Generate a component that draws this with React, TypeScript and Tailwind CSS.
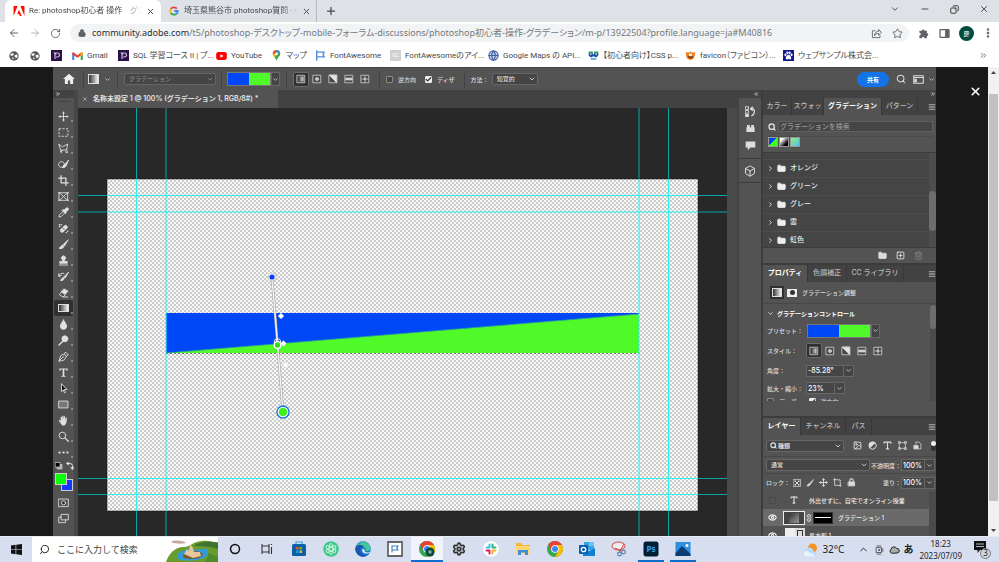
import type { ReactNode } from "react";
import {
	ArrowLeft,
	ArrowRight,
	Box,
	Check,
	ChevronDown,
	ChevronRight,
	ChevronsLeft,
	ChevronsRight,
	ChevronUp,
	Copy,
	Crop,
	EllipsisVertical,
	Eye,
	Folder,
	Globe,
	Image as ImageIcon,
	Link2,
	Lock,
	Menu,
	Minus,
	Move,
	Plus,
	RotateCw,
	Search,
	Settings,
	SquarePlus,
	Star,
	Trash2,
	X,
} from "lucide-react";

interface IconProps {
	className?: string;
	children: ReactNode;
}

function Glyph({ className = "size-3", children }: IconProps) {
	return (
		<svg
			viewBox="0 0 16 16"
			fill="none"
			stroke="currentColor"
			strokeWidth="1.3"
			strokeLinecap="round"
			strokeLinejoin="round"
			aria-hidden="true"
			className={`shrink-0 ${className}`}
		>
			{children}
		</svg>
	);
}

/* ---------- browser ---------- */

function GoogleG() {
	return (
		<Glyph className="size-[10px]">
			<g strokeWidth="3" strokeLinecap="butt">
				<path d="M12.5 4.2A6 6 0 0 0 3 4.8" stroke="#ea4335" />
				<path d="M3 4.8a6 6 0 0 0 0 6.4" stroke="#fbbc05" />
				<path d="M3 11.2a6 6 0 0 0 9 1.3" stroke="#34a853" />
				<path d="M12 12.5A6 6 0 0 0 14 8H8.5" stroke="#4285f4" />
			</g>
		</Glyph>
	);
}

function AdobeLogo() {
	return (
		<svg viewBox="0 0 24 22" className="h-[10px] w-[12px] shrink-0" aria-hidden="true">
			<path d="M0 0h9L0 22zM15 0h9v22zM12 8l6 14h-4l-2-4.500H8z" fill="#fa0f00" />
		</svg>
	);
}

function TabStrip() {
	return (
		<div className="flex h-[22px] items-stretch bg-[#dee1e6] text-[8px] text-[#45494d]">
			<div className="ml-[5px] flex w-[156px] items-center rounded-t-md bg-white pr-[6px] pl-2">
				<AdobeLogo />
				<span className="ml-1 flex-1 overflow-hidden whitespace-pre [mask-image:linear-gradient(to_right,#000_85%,transparent)]">
					Re: photoshop初心者 操作　グラデ
				</span>
				<button type="button" aria-label="Close tab" className="ml-1">
					<X className="size-[9px]" strokeWidth={2.5} />
				</button>
			</div>
			<div className="flex w-[156px] items-center border-r border-[#9aa0a6]/60 pr-[5px] pl-2">
				<GoogleG />
				<span className="ml-[5px] flex-1 overflow-hidden whitespace-nowrap [mask-image:linear-gradient(to_right,#000_85%,transparent)]">
					埼玉県熊谷市 photoshop質問 - G
				</span>
				<button type="button" aria-label="Close tab" className="ml-1">
					<X className="size-[9px]" strokeWidth={2.5} />
				</button>
			</div>
			<button type="button" aria-label="New tab" className="ml-2">
				<Plus className="size-3" strokeWidth={2.5} />
			</button>
			<div className="ml-auto flex items-center gap-[20px] pr-[10px] pb-1 text-[#333]">
				<button type="button" aria-label="Search tabs">
					<ChevronDown className="size-[10px]" />
				</button>
				<button type="button" aria-label="Minimize">
					<Minus className="size-[10px]" />
				</button>
				<button type="button" aria-label="Restore">
					<Copy className="size-[9px] -scale-x-100" strokeWidth={2.5} />
				</button>
				<button type="button" aria-label="Close">
					<X className="size-[10px]" />
				</button>
			</div>
		</div>
	);
}

function AddressBar() {
	return (
		<div className="flex h-[22px] items-center bg-white pr-[5px] pl-2 text-[#5f6368]">
			<button type="button" aria-label="Back">
				<ArrowLeft className="size-3" />
			</button>
			<button type="button" aria-label="Forward" className="ml-[9px] text-[#b5b8bb]">
				<ArrowRight className="size-3" />
			</button>
			<button type="button" aria-label="Reload" className="ml-[9px]">
				<RotateCw className="size-[11px]" />
			</button>
			<div className="ml-[9px] flex h-[18px] flex-1 items-center rounded-full bg-[#f1f3f4] pr-[6px] pl-2">
				<Lock className="size-2 fill-current" strokeWidth={3} />
				<div className="ml-[6px] flex-1 overflow-hidden font-['Noto_Sans','Noto_Sans_CJK_JP',sans-serif] text-[9px] whitespace-nowrap text-[#75797d]">
					<span className="text-[#2c2f33]">community.adobe.com</span>
					/t5/photoshop-デスクトップ-mobile-フォーラム-discussions/photoshop初心者-操作-グラデーション/m-p/13922504?profile.language=ja#M40816
				</div>
				<button type="button" aria-label="Share">
					<Glyph className="size-[11px]">
						<path d="M6 4H2v10h11v-3M5 11c0-4 3-6 6-6V2l4 4.500-4 4V8c-3 0-5 1-6 3z" />
					</Glyph>
				</button>
				<button type="button" aria-label="Bookmark" className="ml-[10px]">
					<Star className="size-[11px]" />
				</button>
			</div>
			<button type="button" aria-label="Extensions" className="ml-[9px]">
				<Glyph className="size-[11px]">
					<path
						d="M2 4h3.500a2 2 0 1 1 4 0H13v3.500a2 2 0 1 1 0 4V15H9.500a2 2 0 1 0-4 0H2v-4a2 2 0 1 0 0-4z"
						fill="currentColor"
						stroke="none"
					/>
				</Glyph>
			</button>
			<button type="button" aria-label="Side panel" className="ml-[10px]">
				<Glyph className="size-[11px]">
					<path d="M1.500 2.500h13v11h-13z" strokeWidth="1.800" />
					<path d="M10 3h4v10h-4z" fill="currentColor" />
				</Glyph>
			</button>
			<button
				type="button"
				className="ml-[9px] flex size-[15px] items-center justify-center rounded-full bg-[#004d40] text-[6px] text-white"
			>
				慶
			</button>
			<button type="button" aria-label="Menu" className="ml-2">
				<EllipsisVertical className="size-3" strokeWidth={3} />
			</button>
		</div>
	);
}

function PurpleMark() {
	return (
		<svg viewBox="0 0 11 11" className="size-[11px] shrink-0" aria-hidden="true">
			<path d="M0 0h11v11H0z" fill="#2b1145" />
			<path d="M4 9V3h2.500a2 2 0 0 1 0 4H5" fill="none" stroke="#cdbbe0" strokeWidth="1.200" />
			<path d="M3 2.500l2 2" stroke="#fff" />
		</svg>
	);
}

function GlobeMark() {
	return (
		<svg viewBox="0 0 16 16" className="size-[10px] shrink-0" aria-hidden="true">
			<circle cx="8" cy="8" r="7.500" fill="#55595e" />
			<path d="M2 5l4-2 2 2-3 3-2-1zM9 7l4-2 1 4-3 3-1-3-2-1zM5 10l3 1-2 3z" fill="#fff" />
		</svg>
	);
}

interface Bookmark {
	icon: ReactNode;
	label: string;
	width: string;
}

const bookmarks: Bookmark[] = [
	{
		label: "Gmail",
		width: "w-[31px]",
		icon: (
			<svg viewBox="0 0 20 15" className="h-2 w-[11px] shrink-0" aria-hidden="true">
				<path d="M0 2v13h4V5z" fill="#4285f4" />
				<path d="M20 2v13h-4V5z" fill="#34a853" />
				<path d="M0 2l2-2 8 6 8-6 2 2v2l-10 7L0 4z" fill="#ea4335" />
				<path d="M16 3l2-3 2 2v3l-4 3z" fill="#fbbc04" />
			</svg>
		),
	},
	{ label: "SQL 学習コース II | プ...", width: "w-[83px]", icon: <PurpleMark /> },
	{
		label: "YouTube",
		width: "w-[40px]",
		icon: (
			<svg viewBox="0 0 20 15" className="h-2 w-[11px] shrink-0" aria-hidden="true">
				<rect width="20" height="15" rx="4" fill="#f00" />
				<path d="M8 4l6 3.500-6 3.500z" fill="#fff" />
			</svg>
		),
	},
	{
		label: "マップ",
		width: "w-[29px]",
		icon: (
			<svg viewBox="0 0 16 16" className="size-[11px] shrink-0" aria-hidden="true">
				<path d="M8 0a5.500 5.500 0 0 1 5.500 5.500C13.500 9 9 11 8 16 7 11 2.500 9 2.500 5.500z" fill="#34a853" />
				<path d="M8 0a5.500 5.500 0 0 0-5.500 5.500L8 6z" fill="#ea4335" />
				<path d="M8 0a5.500 5.500 0 0 1 5 3.500L8 6z" fill="#4285f4" />
				<path d="M2.500 5.500C2.500 8 4 9 5.500 11L10 5z" fill="#fbbc04" />
				<circle cx="8" cy="5.500" r="2" fill="#fff" />
			</svg>
		),
	},
	{
		label: "FontAwesome",
		width: "w-[60px]",
		icon: (
			<Glyph className="size-[11px] text-[#528dd7]">
				<path d="M2.500 1v14M2.500 3h11l-2 3.500 2 3.500h-11" strokeWidth="2" />
			</Glyph>
		),
	},
	{
		label: "FontAwesomeのアイ...",
		width: "w-[83px]",
		icon: (
			<span className="flex size-[11px] shrink-0 items-center justify-center bg-[#d0d0d0] text-[5px] text-white">
				GC
			</span>
		),
	},
	{
		label: "Google Maps の API...",
		width: "w-[85px]",
		icon: <Globe className="size-[11px] shrink-0 fill-[#c5cfe6] text-[#3f5fa8]" strokeWidth={2.5} />,
	},
	{
		label: "【初心者向け】CSS p...",
		width: "w-[82px]",
		icon: (
			<svg viewBox="0 0 16 14" className="size-[11px] shrink-0" aria-hidden="true">
				<path d="M1 1h6v4H1zM9 1h6v4H9z" fill="#2ba05a" />
				<path d="M1 4h6l1 2 1-2h6v3l-3 3-4-2-4 2-3-3z" fill="#1d4fa8" />
				<path d="M3 4h2v2H3zM11 4h2v2h-2z" fill="#fff" />
				<path d="M4 11h8v2H4z" fill="#2b8fd0" />
			</svg>
		),
	},
	{
		label: "favicon（ファビコン）...",
		width: "w-[83px]",
		icon: (
			<svg viewBox="0 0 16 14" className="size-[11px] shrink-0" aria-hidden="true">
				<path d="M1 2l4 1 3-2 3 2 4-1-1 6-2 4-4 1.500L4 12 2 9z" fill="#f07d1a" />
				<path d="M4 8h8l-2 3H6z" fill="#5a3010" />
				<circle cx="8" cy="6" r="2.300" fill="#fff3df" />
			</svg>
		),
	},
	{
		label: "ウェブサンプル株式会...",
		width: "w-[83px]",
		icon: (
			<svg viewBox="0 0 16 16" className="size-[11px] shrink-0" aria-hidden="true">
				<path d="M0 0h16v16H0z" fill="#101a8c" />
				<g fill="#fff">
					<ellipse cx="3.500" cy="7" rx="1.500" ry="2" />
					<ellipse cx="6.300" cy="4" rx="1.500" ry="2" />
					<ellipse cx="9.700" cy="4" rx="1.500" ry="2" />
					<ellipse cx="12.500" cy="7" rx="1.500" ry="2" />
					<path d="M8 7c2 0 4 3 4 5s-2 2-4 1c-2 1-4 1-4-1s2-5 4-5z" />
				</g>
			</svg>
		),
	},
];

function BookmarksBar() {
	return (
		<nav className="flex h-[23px] items-center bg-white pr-[11px] pl-[9px] text-[8px] text-[#45494d]">
			<a href="#a" aria-label="Site" className="mr-[11px]">
				<GlobeMark />
			</a>
			<a href="#b" aria-label="Site" className="mr-[11px]">
				<GlobeMark />
			</a>
			<a href="#c" aria-label="Site" className="mr-[10px]">
				<PurpleMark />
			</a>
			{bookmarks.map((b) => (
				<a key={b.label} href="#bookmark" className="flex items-center gap-1 whitespace-nowrap">
					{b.icon}
					<span className={b.width}>{b.label}</span>
				</a>
			))}
			<button type="button" aria-label="More bookmarks" className="ml-auto">
				<ChevronsRight className="size-[9px]" />
			</button>
		</nav>
	);
}

/* ---------- photoshop parts ---------- */

interface SelectProps {
	label: string;
	value: string;
	className?: string;
}

function Select({ label, value, className = "" }: SelectProps) {
	return (
		<div className={`relative h-3 rounded-[2px] border border-[#666] bg-[#454545] ${className}`}>
			<select
				aria-label={label}
				className="block h-full w-full appearance-none bg-transparent pl-1 leading-none outline-none"
			>
				<option>{value}</option>
			</select>
			<ChevronDown className="pointer-events-none absolute top-px right-px size-2" strokeWidth={2.5} />
		</div>
	);
}

interface NumberFieldProps {
	id: string;
	label: string;
	value: string;
	width: string;
	labelClass?: string;
}

function NumberField({ id, label, value, width, labelClass = "" }: NumberFieldProps) {
	return (
		<div className="flex items-center">
			<label htmlFor={id} className={`whitespace-nowrap ${labelClass}`}>
				{label}
			</label>
			<div className="flex h-3 items-stretch border border-[#666] bg-[#454545]">
				<input
					id={id}
					defaultValue={value}
					className={`bg-transparent pl-px text-[7px] leading-none font-medium text-white outline-none ${width}`}
				/>
				<button type="button" aria-label={`${label} options`} className="border-l border-[#666] px-px">
					<ChevronDown className="size-[7px]" strokeWidth={2.5} />
				</button>
			</div>
		</div>
	);
}

function GradientPreset({ className }: { className: string }) {
	return (
		<div className="flex h-[14px] items-stretch">
			<button
				type="button"
				aria-label="Gradient preset"
				className={`border border-[#777] bg-[linear-gradient(to_right,#0047f5_50%,#50fa28_50%)] ${className}`}
			/>
			<button type="button" aria-label="Gradient presets" className="border border-[#666] bg-[#454545]">
				<ChevronDown className="size-[7px]" strokeWidth={2.5} />
			</button>
		</div>
	);
}

const gradientStyles: { name: string; art: ReactNode }[] = [
	{ name: "Linear", art: <path d="M4 4h8v8H4z" fill="url(#fade)" stroke="none" /> },
	{
		name: "Radial",
		art: <circle cx="8" cy="8" r="2.500" fill="#ddd" fillOpacity=".8" />,
	},
	{ name: "Angle", art: <path d="M2 2l6 6 6 6V2z" fill="#e4e4e4" /> },
	{ name: "Reflected", art: <path d="M3 6.500h10v3H3z" fill="#ddd" /> },
	{ name: "Diamond", art: <path d="M8 3v10M3 8h10M7 7h2v2H7z" /> },
];

function GradientStyleButtons() {
	return (
		<div className="flex items-center">
			{gradientStyles.map((s, i) => (
				<button
					key={s.name}
					type="button"
					aria-label={s.name}
					className={`flex h-[15px] w-4 items-center justify-center rounded-[2px] ${i === 0 ? "border border-[#6a6a6a] bg-[#303030]" : ""}`}
				>
					<Glyph className="size-[10px] text-[#d0d0d0]">
						<defs>
							<linearGradient id="fade">
								<stop offset="0" stopColor="#444" />
								<stop offset="1" stopColor="#ddd" />
							</linearGradient>
						</defs>
						<path d="M2 2h12v12H2z" fill="#484848" />
						{s.art}
					</Glyph>
				</button>
			))}
		</div>
	);
}

function GradientIcon({ className = "h-[9px] w-3" }: { className?: string }) {
	return (
		<span
			className={`block shrink-0 border border-[#ddd] bg-[linear-gradient(to_right,#333,#f5f5f5)] ${className}`}
		/>
	);
}

function Divider() {
	return <span className="h-[17px] w-px bg-[#424242]" />;
}

interface TickProps {
	id: string;
	label: string;
	checked?: boolean;
}

function Tick({ id, label, checked }: TickProps) {
	return (
		<label htmlFor={id} className="flex items-center gap-[5px]">
			<span className="relative block size-[7px]">
				<input
					id={id}
					type="checkbox"
					defaultChecked={checked}
					className="peer block size-[7px] appearance-none rounded-[1px] border border-[#888] bg-[#454545] checked:border-[#eee] checked:bg-[#eee]"
				/>
				<Check
					className="pointer-events-none absolute inset-0 hidden size-[7px] text-[#333] peer-checked:block"
					strokeWidth={4}
				/>
			</span>
			{label}
		</label>
	);
}

function OptionsBar() {
	return (
		<div className="flex h-[23px] items-center border-t border-[#444] bg-[#535353] text-[6px]">
			<button type="button" aria-label="Home" className="ml-[10px]">
				<Glyph className="size-3 text-[#eee]">
					<path d="M8 1L0 8h2.500v6.500H6.500V10h3v4.500h4V8H16z" fill="currentColor" stroke="none" />
				</Glyph>
			</button>
			<span className="ml-[8px] flex items-center">
				<Divider />
			</span>
			<button type="button" aria-label="Gradient tool" className="ml-1 flex items-center gap-[5px]">
				<GradientIcon className="h-[10px] w-[11px]" />
				<ChevronDown className="size-[7px]" strokeWidth={2.5} />
			</button>
			<span className="mx-[6px] flex items-center">
				<Divider />
			</span>
			<Select label="Gradient kind" value="グラデーション" className="w-[92px] text-[#888]" />
			<span className="mx-[5px] flex items-center">
				<Divider />
			</span>
			<GradientPreset className="w-[44px]" />
			<span className="mx-[6px] flex items-center">
				<Divider />
			</span>
			<GradientStyleButtons />
			<span className="mx-[6px] flex items-center">
				<Divider />
			</span>
			<Tick id="reverse" label="逆方向" />
			<span className="ml-[9px]">
				<Tick id="dither" label="ディザ" checked />
			</span>
			<span className="mx-[6px] ml-[9px] flex items-center">
				<Divider />
			</span>
			<span>方法：</span>
			<Select label="Method" value="知覚的" className="ml-[3px] w-[46px]" />
			<button
				type="button"
				className="ml-auto h-[15px] rounded-full bg-[#1473e6] px-[10px] text-[6px] font-bold text-white"
			>
				共有
			</button>
			<button type="button" aria-label="Search" className="ml-[7px]">
				<Search className="size-[10px]" strokeWidth={2.5} />
			</button>
			<button type="button" aria-label="Workspace" className="ml-[7px] flex items-center gap-[4px] pr-px">
				<Glyph className="size-[11px]">
					<path d="M1 2.500h14v11H1zM1 5h14" strokeWidth="1.500" />
					<path d="M3 7.500h2v4H3z" fill="currentColor" />
				</Glyph>
				<ChevronDown className="size-[7px]" strokeWidth={2.5} />
			</button>
		</div>
	);
}

const tools: { name: string; art: ReactNode }[] = [
	{
		name: "Move",
		art: (
			<>
				<path d="M8 3v10M3 8h10" />
				<path d="M8 .5L10 3.500H6zM8 15.500L6 12.500h4zM.5 8L3.500 6v4zM15.500 8l-3 2V6z" fill="currentColor" stroke="none" />
			</>
		),
	},
	{ name: "Marquee", art: <path d="M1.500 2.500h13v11h-13z" strokeDasharray="3 2" strokeLinecap="butt" /> },
	{ name: "Lasso", art: <path d="M1.500 2l5 3.500L14 1.500 12.500 10l-8 .5zM4.500 10.500c-2 1-1 3 .5 2.500M6 10.500l-1.500 4M12.500 10l1.500 4-3.500-1" /> },
	{
		name: "Quick selection",
		art: (
			<>
				<circle cx="5" cy="8" r="4.200" strokeDasharray="2 1" />
				<path d="M15 2L10 8c-2 .5-3 2-3 4.500 3 0 4.500-1 5-3z" fill="currentColor" />
			</>
		),
	},
	{ name: "Crop", art: <path d="M4.500 1v10.500H15M1 4.500h10.500V15" strokeWidth="1.800" /> },
	{ name: "Frame", art: <path d="M2 2.500h12v11H2zM2 2.500l12 11M14 2.500l-12 11M0 2.500h2M14 2.500h2M0 13.500h2M14 13.500h2" /> },
	{
		name: "Eyedropper",
		art: (
			<>
				<path d="M8 5.500L2 11.500 1.500 14.500 4.500 14l6-6" />
				<path d="M7.500 4l1.500.5L12 1.500a2 2 0 0 1 2.800 2.800L11.500 7l.5 1.500-1.500 1L6.500 5.500z" fill="currentColor" />
			</>
		),
	},
	{
		name: "Healing brush",
		art: (
			<>
				<path d="M4 9.500L9.500 4a2.500 2.500 0 0 1 3.500 3.500L7.500 13A2.500 2.500 0 0 1 4 9.500z" fill="currentColor" />
				<path d="M7 7.500l2.500 2.500" stroke="#535353" />
				<path d="M2 5h.5M4.500 2.500H5M2 2.500h.1M14 12h.2M12 14h.2" strokeWidth="2" />
			</>
		),
	},
	{
		name: "Brush",
		art: <path d="M14.500 1.500L7.500 8l1.500 2zM6.500 9c-3 0-2 3.500-5 4.500 3.500 1.500 7 0 6.500-3z" fill="currentColor" />,
	},
	{
		name: "Clone stamp",
		art: <path d="M2 14.500h12M2.500 11.500V9.500h4L6.500 7a3 3 0 1 1 3 0v2.500h4v2z" fill="currentColor" />,
	},
	{
		name: "History brush",
		art: (
			<>
				<path d="M15 2L8.500 8.500l1.500 1.500zM7.500 9.500c-2 0-2 3-4 4 3 1 5.500 0 5-2.500z" fill="currentColor" />
				<path d="M1.500 8c0-4 3-5 7-4.500M1 4l.5 4 3.500-1.500" />
			</>
		),
	},
	{
		name: "Eraser",
		art: (
			<>
				<path d="M9 3l5.500 3-4 4.500L5 7.500z" fill="currentColor" />
				<path d="M5 7.500L2 11l4 3h2.500l2-3.500M8 14.500h6" />
			</>
		),
	},
	{ name: "Gradient", art: null },
	{ name: "Blur", art: <path d="M8 1.500C6 5 3.500 7.500 3.500 10.500a4.500 4.500 0 0 0 9 0C12.500 7.500 10 5 8 1.500z" fill="currentColor" /> },
	{
		name: "Dodge",
		art: (
			<>
				<circle cx="10" cy="5.500" r="4.300" fill="currentColor" />
				<path d="M7 9l-5.500 5.500" strokeWidth="2" />
			</>
		),
	},
	{ name: "Pen", art: <path d="M1.500 14.500L4 6.500l5-2 3 3-2.500 5zM1.500 14.500L7 9M9 4.500l2-3 4 4-3 2M7.500 8.500h.5" /> },
	{
		name: "Type",
		art: (
			<path
				d="M2 2h12v3.500h-1.300L12 3.800H9.200v8.800l1.800.4v1.200H5V13l1.800-.4V3.800H4L3.300 5.500H2z"
				fill="currentColor"
				stroke="none"
			/>
		),
	},
	{ name: "Path selection", art: <path d="M5 1.500v11l2.500-2.500 2 4.500 1.500-.7-2-4.300h3.500z" fill="#151515" /> },
	{ name: "Rectangle", art: <path d="M1.500 3h13v10h-13z" fill="#777" /> },
	{
		name: "Hand",
		art: (
			<path
				d="M5 13.500L1.500 8.500c-.5-1 .8-1.500 1.500-.7L4.500 9 4 3.500c0-1 1.300-1 1.500 0L6.200 7V2c0-1 1.500-1 1.600 0L8 7l.8-4.500c.2-1 1.500-.8 1.500.2L10 7.500l1.500-3c.5-.8 1.500-.3 1.300.5L12 10.500c-.3 2-1.500 4-3 4.500H6.500z"
				fill="currentColor"
				strokeWidth=".5"
			/>
		),
	},
	{
		name: "Zoom",
		art: (
			<>
				<circle cx="6.500" cy="6.500" r="4.800" />
				<path d="M10 10l5 5" strokeWidth="1.800" />
			</>
		),
	},
	{ name: "More tools", art: <path d="M2 8h.5M7.800 8h.5M13.500 8h.5" strokeWidth="3" /> },
];

function ToolColumn() {
	return (
		<aside className="flex w-[25px] shrink-0 flex-col border-r-4 border-[#474747] bg-[#535353]">
			<div className="flex h-2 items-center bg-[#424242] pl-[2px]">
				<ChevronsRight className="size-[6px]" strokeWidth={3} />
			</div>
			<div className="flex h-[10px] justify-center pt-[3px]">
				<span className="h-px w-3 bg-[#444]" />
			</div>
			{tools.map((t) => (
				<button
					key={t.name}
					type="button"
					aria-label={t.name}
					className={`relative mx-px flex h-4 shrink-0 items-center justify-center rounded-[2px] text-[#e0e0e0] ${t.name === "Gradient" ? "bg-[#303030]" : ""}`}
				>
					{t.art ? <Glyph className="size-[11px]">{t.art}</Glyph> : <GradientIcon className="h-2 w-[11px]" />}
					<span className="absolute right-0 bottom-[2px] size-[2px] rounded-full bg-[#999]" />
				</button>
			))}
			<div className="flex h-3 items-center justify-between pl-[2px]">
				<Glyph className="size-2">
					<path d="M5 5h9v9H5z" fill="#aaa" />
					<path d="M1 1h9v9H1z" fill="#000" />
				</Glyph>
				<Glyph className="size-2">
					<path d="M5 3h3a5 5 0 0 1 5 5v4" strokeWidth="2" />
					<path d="M5 0v6L1 3zM10 11h6l-3 4z" fill="currentColor" />
				</Glyph>
			</div>
			<div className="relative h-5">
				<button
					type="button"
					aria-label="Background color"
					className="absolute top-[7px] left-2 size-3 border border-[#ccc] bg-[#1438ff]"
				/>
				<button
					type="button"
					aria-label="Foreground color"
					className="absolute top-px left-[2px] size-3 border border-[#ccc] bg-[#0cff0c]"
				/>
			</div>
			<button type="button" aria-label="Quick mask" className="mt-[2px] flex h-4 items-center justify-center">
				<Glyph className="size-[11px]">
					<path d="M1 3h14v11H1z" />
					<circle cx="8" cy="8.500" r="3" fill="#333" />
				</Glyph>
			</button>
			<button type="button" aria-label="Screen mode" className="flex h-4 items-center justify-center">
				<Glyph className="size-[11px]">
					<path d="M5 2h10v8H5zM5 6H1v8h10v-4" />
				</Glyph>
			</button>
		</aside>
	);
}

function Handle({ x, y }: { x: number; y: number }) {
	return (
		<path
			d={`M${x} ${y - 3}L${x + 3} ${y}L${x} ${y + 3}L${x - 3} ${y}Z`}
			fill="#fff"
			stroke="#bbb"
			strokeWidth=".4"
		/>
	);
}

function Guides({ color }: { color: string }) {
	return (
		<path
			d="M58.500 0V428M88 0V428M561 0V428M590.500 0V428M0 87.500H649M0 104H649M0 370.500H649M0 386.500H649"
			stroke={color}
			fill="none"
		/>
	);
}

function Canvas() {
	return (
		<svg
			viewBox="0 0 649 428"
			preserveAspectRatio="xMinYMin slice"
			className="h-full min-w-0 flex-1 bg-[#282828]"
			role="img"
			aria-label="Canvas"
		>
			<defs>
				<pattern id="checker" width="4" height="4" patternUnits="userSpaceOnUse">
					<path d="M0 0h4v4H0z" fill="#f8f8f8" />
					<path d="M0 0h2v2H0zM2 2h2v2H2z" fill="#cbcbcb" />
				</pattern>
				<clipPath id="board">
					<path d="M29 71h591v332H29z" />
				</clipPath>
			</defs>
			<Guides color="#08a4a6" />
			<path d="M29 71h591v332H29z" fill="url(#checker)" stroke="#111" strokeWidth=".5" />
			<path d="M88 205h473v40H88z" fill="#0047f5" />
			<path d="M88 245L561 206v39z" fill="#50fa28" />
			<path d="M88 245L561 206" stroke="#2aa0a0" strokeWidth=".8" />
			<path d="M88 245.500h473" stroke="#555" strokeDasharray="2 2" strokeWidth=".8" />
			<g clipPath="url(#board)">
				<Guides color="#2df2f2" />
			</g>
			<path d="M194 169l5.500 67 5.500 68" stroke="#999" strokeWidth="2.500" fill="none" />
			<path d="M194 169l5.500 67 5.500 68" stroke="#f4f4f4" strokeWidth="1.500" fill="none" />
			<circle cx="194" cy="169" r="4" fill="#fff" stroke="#aaa" strokeWidth=".6" />
			<circle cx="194" cy="169" r="2.600" fill="#0a3cf5" />
			<circle cx="199.500" cy="234" r="3.300" fill="none" stroke="#eee" />
			<circle cx="199.500" cy="237" r="3.300" fill="#30d820" stroke="#fff" strokeWidth="1.300" />
			<Handle x={203} y={208} />
			<Handle x={205.5} y={235.5} />
			<Handle x={207.5} y={257} />
			<circle cx="205" cy="304" r="6" fill="#fff" stroke="#1473e6" strokeWidth="1.300" />
			<circle cx="205" cy="304" r="4.300" fill="#3fee1c" />
		</svg>
	);
}

function DocumentArea() {
	return (
		<main className="flex min-w-0 flex-1 flex-col">
			<div className="flex h-[18px] shrink-0 bg-[#424242]">
				<div className="flex w-[200px] items-center gap-[5px] bg-[#535353] pl-1 text-[7px] font-semibold whitespace-nowrap text-[#e4e4e4]">
					<button type="button" aria-label="Close document">
						<X className="size-[6px]" />
					</button>
					名称未設定 1 @ 100% (グラデーション 1, RGB/8#) *
				</div>
			</div>
			<div className="flex min-h-0 flex-1">
				<Canvas />
				<div className="w-3 shrink-0 border-r-2 border-[#424242] bg-[#4a4a4a]" />
			</div>
		</main>
	);
}

function Dock() {
	return (
		<aside className="flex w-6 shrink-0 flex-col border-r-2 border-[#3c3c3c] bg-[#535353] text-[#ddd]">
			<div className="flex h-2 items-center justify-end bg-[#424242] pr-[2px]">
				<ChevronsLeft className="size-[6px]" strokeWidth={3} />
			</div>
			<div className="flex h-[61px] flex-col items-center gap-[6px] border-b border-[#3c3c3c] pt-2">
				<Glyph className="size-[11px]">
					<path d="M1 1h4v4H1zM1 6.500h4v4H1z" />
					<path d="M1 12h4v3.500H1z" fill="currentColor" />
					<path d="M8 4h4M8 4l3-2.500M8 4l3 2.500M12 4c3 3 2 8-2 10" strokeWidth="1.800" />
				</Glyph>
				<Glyph className="size-[11px]">
					<path d="M2 13V6h1V3h4v3h2V3h4v3h1v7z" fill="currentColor" stroke="none" />
				</Glyph>
				<Glyph className="size-[11px]">
					<path d="M1 2h14v9H8l-4 4v-4H1z" fill="currentColor" stroke="none" />
				</Glyph>
			</div>
			<div className="flex h-[24px] items-center justify-center border-b border-[#3c3c3c]">
				<Box className="size-3" />
			</div>
		</aside>
	);
}

interface PanelTabsProps {
	tabs: { label: string; width: string }[];
	active: string;
}

function PanelTabs({ tabs, active }: PanelTabsProps) {
	return (
		<div className="flex h-[17px] shrink-0 items-stretch bg-[#424242] text-[7px]">
			{tabs.map((t) => (
				<button
					key={t.label}
					type="button"
					className={`border-r border-[#383838] text-center whitespace-nowrap ${t.width} ${t.label === active ? "bg-[#535353] font-bold text-white" : "text-[#b8b8b8]"}`}
				>
					{t.label}
				</button>
			))}
			<button type="button" aria-label="Panel menu" className="ml-auto text-[#999]">
				<Menu className="size-2" strokeWidth={4} />
			</button>
		</div>
	);
}

const gradientFolders = ["オレンジ", "グリーン", "グレー", "雲", "虹色"];

function GradientsPanel() {
	return (
		<section className="flex h-[167px] shrink-0 flex-col">
			<PanelTabs
				active="グラデーション"
				tabs={[
					{ label: "カラー", width: "w-[29px]" },
					{ label: "スウォッ", width: "w-[32px]" },
					{ label: "グラデーション", width: "w-[58px]" },
					{ label: "パターン", width: "w-[36px]" },
				]}
			/>
			<div className="flex items-center gap-[2px] pt-[6px] pr-[3px] pl-[5px]">
				<Search className="size-2" strokeWidth={4} />
				<input
					aria-label="Search gradients"
					placeholder="グラデーションを検索"
					className="h-[11px] min-w-0 flex-1 border border-[#606060] bg-[#454545] px-px text-[7px] leading-none outline-none placeholder:text-[#999]"
				/>
			</div>
			<div className="mt-1 mr-1 ml-[5px] flex gap-px border-t border-[#4a4a4a] pb-[5px]">
				<button
					type="button"
					aria-label="Blue green"
					className="size-[10px] border border-[#999] bg-[linear-gradient(135deg,#0040ff_50%,#3dff20_50%)]"
				/>
				<button
					type="button"
					aria-label="White black"
					className="size-[10px] border border-[#999] bg-[linear-gradient(135deg,#fff_20%,#000_75%)]"
				/>
				<button
					type="button"
					aria-label="Green cyan"
					className="size-[10px] border border-[#999] bg-[linear-gradient(135deg,#8cf07a,#58c0f0)]"
				/>
			</div>
			<div className="flex min-h-0 flex-1 border-y border-[#3c3c3c] bg-[#454545]">
				<ul className="min-w-0 flex-1 pt-[6px]">
					{gradientFolders.map((name) => (
						<li
							key={name}
							className="flex h-[18px] items-center gap-1 border-t border-[#4d4d4d] pl-1 text-[7px] font-medium text-[#eee]"
						>
							<ChevronRight className="size-[7px]" strokeWidth={3} />
							<Folder className="-ml-px size-[9px] fill-current" />
							{name}
						</li>
					))}
				</ul>
				<div className="w-[7px] bg-[#4d4d4d] pt-[38px]">
					<div className="h-10 rounded-full bg-[#6d6d6d]" />
				</div>
			</div>
			<div className="flex h-[17px] shrink-0 items-center justify-end gap-[9px] border-b-2 border-[#3c3c3c] pr-[13px]">
				<button type="button" aria-label="New group">
					<Folder className="size-[9px] fill-current" />
				</button>
				<button type="button" aria-label="New gradient">
					<SquarePlus className="size-[9px]" strokeWidth={2.5} />
				</button>
				<button type="button" aria-label="Delete" className="text-[#888]">
					<Trash2 className="size-[9px]" />
				</button>
			</div>
		</section>
	);
}

function PropertiesPanel() {
	return (
		<section className="flex h-[153px] shrink-0 flex-col border-b-2 border-[#3c3c3c]">
			<PanelTabs
				active="プロパティ"
				tabs={[
					{ label: "プロパティ", width: "w-[45px]" },
					{ label: "色調補正", width: "w-[39px]" },
					{ label: "CC ライブラリ", width: "w-[57px]" },
				]}
			/>
			<div className="flex h-[22px] shrink-0 items-center gap-[3px] border-b border-[#484848] pl-[7px] text-[6px]">
				<span className="flex h-[13px] w-[14px] items-center justify-center bg-[#303030]">
					<GradientIcon className="h-[9px] w-[10px]" />
				</span>
				<span className="flex h-2 w-[10px] items-center justify-center bg-[#eee]">
					<span className="size-[5px] rounded-full bg-[#333]" />
				</span>
				<span className="ml-[2px]">グラデーション調整</span>
			</div>
			<div className="flex h-[97px] overflow-hidden text-[6px]">
				<div className="flex min-w-0 flex-1 flex-col pl-1">
					<div className="flex h-[18px] shrink-0 items-center gap-[3px] font-bold text-white">
						<ChevronDown className="size-[7px]" strokeWidth={2.5} />
						グラデーションコントロール
					</div>
					<div className="flex h-[17px] shrink-0 items-center">
						<span className="w-[40px]">プリセット：</span>
						<GradientPreset className="w-[64px]" />
					</div>
					<div className="flex h-[23px] shrink-0 items-center">
						<span className="w-[39px]">スタイル：</span>
						<GradientStyleButtons />
					</div>
					<div className="flex h-[17px] shrink-0 items-center">
						<NumberField id="angle" label="角度：" value="-85.28°" width="w-[36px]" labelClass="w-[39px]" />
					</div>
					<div className="flex h-[18px] shrink-0 items-center">
						<NumberField id="scale" label="拡大・縮小：" value="23%" width="w-[27px]" labelClass="w-[39px]" />
					</div>
					<div className="flex shrink-0 gap-3">
						<Tick id="dither-prop" label="ディザ" />
						<Tick id="reverse-prop" label="逆方向" checked />
					</div>
				</div>
				<div className="w-[6px] bg-[#4b4b4b] pt-px">
					<div className="h-6 rounded-full bg-[#6d6d6d]" />
				</div>
			</div>
		</section>
	);
}

function LayersPanel() {
	return (
		<section className="flex min-h-0 flex-1 flex-col overflow-hidden">
			<PanelTabs
				active="レイヤー"
				tabs={[
					{ label: "レイヤー", width: "w-[38px]" },
					{ label: "チャンネル", width: "w-[45px]" },
					{ label: "パス", width: "w-[26px]" },
				]}
			/>
			<div className="flex h-[21px] shrink-0 items-center pl-[3px] text-[6px]">
				<div className="relative w-[78px]">
					<Search className="pointer-events-none absolute top-[2px] left-1 z-10 size-[7px]" strokeWidth={4} />
					<Select label="Layer filter" value="種類" className="pl-[7px] font-bold" />
				</div>
				<div className="ml-[9px] flex items-center gap-[6px] text-[#ddd]">
					<ImageIcon className="size-[9px]" strokeWidth={2.5} />
					<Glyph className="size-[9px]">
						<circle cx="8" cy="8" r="6.500" fill="currentColor" />
						<path d="M12.500 3.500a6.300 6.300 0 0 1-9 9z" fill="#535353" />
					</Glyph>
					<Glyph className="size-[9px]">
						<path d="M2 4V2h12v2M8 2v12M6 14h4" strokeWidth="2" />
					</Glyph>
					<Glyph className="size-[9px]">
						<path d="M3 3h10v10H3zM1 1h3v3H1zM12 1h3v3h-3zM1 12h3v3H1zM12 12h3v3h-3z" />
					</Glyph>
					<Glyph className="size-[9px]">
						<path d="M5 6V2h6l3 3v9H9" />
						<path d="M2 8h7v6H2z" fill="currentColor" />
					</Glyph>
				</div>
				<span className="ml-auto h-[10px] w-[5px] rounded-full bg-[#333]">
					<span className="block size-[5px] rounded-full bg-[#eee]" />
				</span>
			</div>
			<div className="flex h-[17px] shrink-0 items-center justify-between border-t border-[#484848] pr-px pl-[3px] text-[6px]">
				<Select label="Blend mode" value="通常" className="w-[104px]" />
				<NumberField id="opacity" label="不透明度：" value="100%" width="w-[22px]" />
			</div>
			<div className="flex h-[18px] shrink-0 items-center justify-between border-t border-[#484848] pr-px pl-[3px] text-[6px]">
				<div className="flex items-center gap-[5px]">
					<span className="w-[22px] whitespace-nowrap">ロック：</span>
					<Glyph className="size-2">
						<path d="M1 1h14v14H1z" />
						<path d="M3 3h3v3H3zM10 3h3v3h-3zM6 6h4v4H6zM3 10h3v3H3zM10 10h3v3h-3z" fill="currentColor" stroke="none" />
					</Glyph>
					<Glyph className="size-2">
						<path d="M14.500 1.500L7.500 8l1.500 2zM6.500 9c-3 0-2 3.500-5 4.500 3.500 1.500 7 0 6.500-3z" fill="currentColor" />
					</Glyph>
					<Move className="size-[9px]" strokeWidth={2.5} />
					<Glyph className="size-[9px]">
						<path d="M3 1v12h11M1 3h8l4 4v8M11 2l3 3" strokeWidth="1.500" />
					</Glyph>
					<Glyph className="size-[9px]">
						<path d="M5 7V4.500a3 3 0 0 1 6 0V7" strokeWidth="2" />
						<path d="M2.500 7h11v7h-11z" fill="currentColor" />
					</Glyph>
				</div>
				<NumberField id="fill" label="塗り：" value="100%" width="w-[22px]" />
			</div>
			<div className="flex min-h-0 flex-1 overflow-hidden bg-[#4b4b4b] text-[6px] font-medium text-[#eee]">
				<ul className="min-w-0 flex-1">
					<li className="flex h-[18px] items-center bg-[#535353]">
						<span className="ml-[6px] size-[7px] border border-[#4a4a4a]" />
						<span className="mr-[9px] ml-[10px] w-[14px] pl-[4px]">
							<Glyph className="size-2">
								<path d="M2 4V2h12v2M8 2v12M6 14h4" strokeWidth="2" />
							</Glyph>
						</span>
						<span className="whitespace-nowrap">外出せずに、自宅でオンライン授業</span>
					</li>
					<li className="flex h-[17px] items-center bg-[#6a6a6a]">
						<Eye className="ml-[5px] size-[9px]" strokeWidth={3} />
						<span className="ml-[6px] flex h-[14px] w-[22px] items-center justify-center border border-[#eee] bg-[#444]">
							<span className="h-[10px] w-[10px] bg-[linear-gradient(135deg,#333,#999)]" />
						</span>
						<Link2 className="size-[8px] rotate-90" strokeWidth={2.5} />
						<span className="flex h-3 w-5 items-center justify-center border border-[#333] bg-black">
							<span className="h-px w-4 bg-white" />
						</span>
						<span className="ml-[5px] whitespace-nowrap">グラデーション 1</span>
					</li>
					<li className="flex h-[18px] items-center bg-[#535353]">
						<Eye className="ml-[5px] size-[9px]" strokeWidth={3} />
						<span className="ml-2 h-[14px] w-[10px] bg-[#eee]" />
						<span className="flex h-[14px] w-[10px] items-center justify-center bg-[#ddd]">
							<span className="h-[10px] w-[6px] border border-[#333]" />
						</span>
						<span className="ml-1 whitespace-nowrap">長方形 1</span>
					</li>
				</ul>
				<div className="w-[7px]" />
			</div>
		</section>
	);
}

function Photoshop() {
	return (
		<div className="flex min-w-0 flex-1 flex-col bg-[#535353] font-[Inter,'Noto_Sans_CJK_JP',sans-serif] font-medium text-[#dcdcdc]">
			<OptionsBar />
			<div className="flex min-h-0 flex-1">
				<ToolColumn />
				<DocumentArea />
				<Dock />
				<div className="flex w-[173px] shrink-0 flex-col">
					<div className="flex h-2 shrink-0 items-center justify-end bg-[#424242]">
						<ChevronsRight className="size-[6px]" strokeWidth={3} />
					</div>
					<GradientsPanel />
					<PropertiesPanel />
					<LayersPanel />
				</div>
			</div>
		</div>
	);
}

/* ---------- windows taskbar ---------- */

function ChromeIcon() {
	return (
		<svg viewBox="0 0 16 16" width="16" height="16" aria-hidden="true">
			<circle cx="8" cy="8" r="8" fill="#34a853" />
			<path d="M1.100 4A8 8 0 0 1 14.900 4H8L5 10.500z" fill="#ea4335" />
			<path d="M14.900 4A8 8 0 0 1 8 16l3.500-6L8 4z" fill="#fbbc04" />
			<circle cx="8" cy="8" r="3.800" fill="#fff" />
			<circle cx="8" cy="8" r="3" fill="#4285f4" />
		</svg>
	);
}

const taskbarApps: { name: string; state?: "active" | "open"; art: ReactNode }[] = [
	{
		name: "Cortana",
		art: <circle cx="8" cy="8" r="4.500" fill="none" stroke="#111" strokeWidth="1.500" />,
	},
	{
		name: "Task view",
		art: (
			<path
				d="M3 3v2h7V3M3 13v-2h7v2M3 5v6M10 5v6M12.500 3v1M12.500 6v7"
				fill="none"
				stroke="#333"
				strokeWidth="1.100"
			/>
		),
	},
	{
		name: "Store",
		art: (
			<>
				<path d="M5 3V1h6v2" fill="none" stroke="#2aa5e8" strokeWidth="1.200" />
				<rect x="1" y="3" width="14" height="12" rx="1.500" fill="#0f5ea8" />
				<path d="M5 6h2.500v2.500H5z" fill="#f25022" />
				<path d="M8.500 6H11v2.500H8.500z" fill="#7fba00" />
				<path d="M5 9.500h2.500V12H5z" fill="#00a4ef" />
				<path d="M8.500 9.500H11V12H8.500z" fill="#ffb900" />
			</>
		),
	},
	{
		name: "Atom",
		art: (
			<>
				<circle cx="8" cy="8" r="7.800" fill="#40c98a" />
				<g fill="none" stroke="#d5f7e6" strokeWidth=".9">
					<ellipse cx="8" cy="8" rx="2" ry="5.500" />
					<ellipse cx="8" cy="8" rx="2" ry="5.500" transform="rotate(60 8 8)" />
					<ellipse cx="8" cy="8" rx="2" ry="5.500" transform="rotate(120 8 8)" />
				</g>
			</>
		),
	},
	{
		name: "Edge",
		art: (
			<>
				<circle cx="8" cy="8" r="7.800" fill="#1579cf" />
				<path d="M.5 7C2 0 13-2 15.500 6.500c.5 3-2 4-5 3.500 1-2-.5-4-3-4C4 6 2 8 .5 7z" fill="#42c99b" />
				<path d="M.5 7C2 3 7 3 9 6c-3-.5-5 3-3 6 2 2.500 5 3 8 .5-2 3-6 4-9 2.500S0 10 .5 7z" fill="#1b55b0" />
				<path d="M8 7.500c-2 2 0 5 3 5 2 0 3-.5 4-1.500-2 .5-6 1-5-1.500z" fill="#dfeaf5" />
			</>
		),
	},
	{
		name: "Flag",
		art: (
			<>
				<path d="M1 1h14v14H1z" fill="#fff" stroke="#666" strokeWidth="1.800" />
				<path d="M5 11.500V5h6l-1.200 2L11 9H5" fill="none" stroke="#3a7bc8" strokeWidth="1.100" />
			</>
		),
	},
	{
		name: "Chrome profile",
		state: "active",
		art: (
			<>
				<ChromeIcon />
				<circle cx="11" cy="11" r="4.500" fill="#044b3c" />
				<path d="M9.500 9.500h3v3h-3z" fill="#8ab5a8" />
			</>
		),
	},
	{ name: "Settings", art: <Settings x="1" y="1" width="14" height="14" color="#333" strokeWidth={3} /> },
	{
		name: "Slack",
		art: (
			<>
				<circle cx="8" cy="8" r="7.800" fill="#fff" />
				<g strokeWidth="2" strokeLinecap="round">
					<path d="M6.500 3.500v3M3.500 6.500h2" stroke="#36c5f0" />
					<path d="M9.500 3.500v3M12.500 6.500h-2" stroke="#2eb67d" />
					<path d="M9.500 12.500v-3h3" stroke="#ecb22e" fill="none" />
					<path d="M6.500 12.500v-2M3.500 9.500h3" stroke="#e01e5a" />
				</g>
			</>
		),
	},
	{
		name: "Explorer",
		art: (
			<>
				<path d="M1 2h5l1.500 2H15v9H1z" fill="#f4b63a" />
				<path d="M1 5h14v8H1z" fill="#ffd873" />
				<path d="M3 14V9h10v5h-3v-2.500H6V14z" fill="#3b8fdd" />
			</>
		),
	},
	{ name: "Chrome", art: <ChromeIcon /> },
	{
		name: "Outlook",
		art: (
			<>
				<path d="M5 1h10v8H5z" fill="#32a5e8" />
				<path d="M10 1h5v4h-5z" fill="#68c6f5" />
				<path d="M4 7l6 3 6-3v8H4z" fill="#1580cf" />
				<rect y="4" width="9" height="9" rx="1" fill="#0a5cab" />
				<circle cx="4.500" cy="8.500" r="2.200" fill="none" stroke="#fff" strokeWidth="1.300" />
			</>
		),
	},
	{
		name: "Snipping tool",
		art: (
			<>
				<ellipse cx="7.500" cy="5" rx="6.500" ry="3.800" fill="#f6eeee" stroke="#d86a6a" strokeWidth="1.200" />
				<path d="M4 7l6 3M13 3L8.500 11" stroke="#d04545" />
				<circle cx="8.500" cy="13" r="1.900" fill="none" stroke="#4a7fb5" strokeWidth="1.100" />
				<circle cx="12.500" cy="11" r="1.900" fill="none" stroke="#4a7fb5" strokeWidth="1.100" />
			</>
		),
	},
	{
		name: "Photoshop",
		state: "open",
		art: (
			<>
				<rect x=".5" y=".5" width="15" height="15" rx="2.500" fill="#001e36" />
				<text x="8" y="11" textAnchor="middle" fontSize="8" fontWeight="700" fill="#31a8ff">
					Ps
				</text>
			</>
		),
	},
	{
		name: "Photos",
		state: "open",
		art: (
			<>
				<path d="M.5 1h15v14H.5z" fill="#2e8fe0" />
				<path d="M.5 12L7 5l8.500 8v2H.5z" fill="#0d3c73" />
				<circle cx="12" cy="4.500" r="1.500" fill="#fff" />
			</>
		),
	},
];

function SearchArt() {
	return (
		<svg viewBox="0 0 52 25" className="h-full w-[52px] shrink-0" aria-hidden="true">
			<path d="M0 25c3-8 8-15 18-15 6 0 8-5 18-6 8-1 11 2 16 1v20z" fill="#6a9b2f" />
			<path d="M28 9c6-5 18-5 24-3v6c-8-3-16-3-24-3z" fill="#3f7330" />
			<path d="M11 19c2-6 12-8 22-6 4-2 8-2 9 1s-2 8-12 9c-9 1-20 1-19-4z" fill="#2f9bd8" />
			<path d="M17 18c2-4 16-5 19-2s-4 6-10 6-10-1-9-4z" fill="#7b5a33" />
			<path d="M18 17l3-5 2 2 1-7 3 4 1 4 6 0 1 4-8 2z" fill="#e7c79a" />
			<path d="M5 5c2-2 12-2 15 1-3 1-12 1-15-1z" fill="#caa9a3" />
			<path d="M42 16c4 0 6 3 10 4v5H38c3-3 5-6 4-9z" fill="#4f8a2a" />
		</svg>
	);
}

function Taskbar() {
	return (
		<footer className="flex h-[26px] shrink-0 items-stretch border-t border-[#e8ebf4] bg-[#d7def0] font-['Noto_Sans','Noto_Sans_CJK_JP',sans-serif] text-[#1f1f1f]">
			<button type="button" aria-label="Start" className="flex w-8 items-center justify-center">
				<svg viewBox="0 0 12 12" className="size-[11px]" aria-hidden="true">
					<path d="M0 1.700l5-.8v4.800H0zM5.700.8L12 0v5.700H5.700zM0 6.400h5v4.800l-5-.8zM5.700 6.400H12V12l-6.300-.8z" fill="#111" />
				</svg>
			</button>
			<div className="flex w-[186px] items-center bg-white pl-[7px]">
				<Search className="size-[11px] -scale-x-100" />
				<input
					aria-label="Search"
					placeholder="ここに入力して検索"
					className="ml-[7px] min-w-0 flex-1 bg-transparent text-[9px] outline-none placeholder:text-[#444]"
				/>
				<SearchArt />
			</div>
			<div className="ml-px flex">
				{taskbarApps.map((app) => (
					<button
						key={app.name}
						type="button"
						aria-label={app.name}
						className={`flex items-center justify-center border-b-2 ${app.state === "active" ? "w-8 border-[#0f6fd0] bg-[#f1f4fa]" : app.state === "open" ? "mx-[3px] w-[26px] border-[#0f6fd0]" : "w-8 border-transparent"}`}
					>
						<svg viewBox="0 0 16 16" className="size-4 shrink-0" aria-hidden="true">
							{app.art}
						</svg>
					</button>
				))}
			</div>
			<div className="ml-auto flex items-center pr-2">
				<svg viewBox="0 0 17 14" className="h-[14px] w-[17px]" aria-hidden="true">
					<circle cx="11.500" cy="5" r="4.500" fill="#f5931e" />
					<path d="M4 13.500a3.500 3.500 0 0 1 0-6.500 4.500 4.500 0 0 1 8.500 1.500 2.500 2.500 0 0 1 .5 5z" fill="#b9dcf8" />
					<path d="M4 13.500a3 3 0 0 1 0-5c2-1 4 0 5 2 2-1 4 1 5 3z" fill="#e6f3fd" />
				</svg>
				<span className="ml-1 text-[10px]">32°C</span>
				<ChevronUp className="ml-[14px] size-[11px]" />
				<Glyph className="ml-[5px] size-[10px] text-[#444]">
					<path d="M4 4h8v8H4zM5 1.500h6M5 14.500h6M14 6v4" />
					<circle cx="8" cy="8" r="1" />
				</Glyph>
				<Glyph className="ml-[4px] size-3">
					<path d="M4 12a3 3 0 0 1 0-5 4 4 0 0 1 7.500-1 3 3 0 0 1 1 6z" fill="#aaa" />
				</Glyph>
				<span className="ml-[3px] text-[10px] font-bold">あ</span>
				<div className="ml-[6px] text-center text-[8px] leading-[12px]">
					<div>18:23</div>
					<div>2023/07/09</div>
				</div>
				<div className="relative ml-3 flex h-[18px] w-[17px] items-start">
					<svg viewBox="0 0 12 12" className="size-3" aria-hidden="true">
						<path d="M0 0h12v9H6l-2.500 3V9H0z" fill="#111" />
						<path d="M2 3h8M2 5.500h8" stroke="#d7def0" strokeWidth=".8" />
					</svg>
					<span className="absolute right-0 bottom-0 flex size-[11px] items-center justify-center rounded-full border border-[#777] bg-[#cfd4e0] text-[8px]">
						3
					</span>
				</div>
			</div>
		</footer>
	);
}

export default function App() {
	return (
		<div className="flex h-screen flex-col overflow-hidden bg-[#1a1a1a] font-[Roboto,'Noto_Sans_CJK_JP',sans-serif]">
			<header className="shrink-0 [font-feature-settings:'palt']">
				<TabStrip />
				<AddressBar />
				<BookmarksBar />
			</header>
			<div className="flex min-h-0 flex-1">
				<div className="w-[53px] shrink-0 bg-[#191919]" />
				<Photoshop />
				<div className="flex w-[52px] shrink-0 justify-end bg-[#191919] pt-[17px] pr-[6px]">
					<button type="button" aria-label="Close image" className="h-[14px] text-white">
						<X className="size-[13px]" strokeWidth={3} />
					</button>
				</div>
				<div className="flex w-[11px] shrink-0 flex-col items-center bg-[#f1f1f1]">
					<svg viewBox="0 0 11 11" className="size-[11px]" aria-hidden="true">
						<path d="M3 7l2.500-3L8 7z" fill="#444" />
					</svg>
					<div className="mt-4 w-[9px] flex-1 bg-[#c1c1c1]" />
					<div className="h-[24px]" />
					<svg viewBox="0 0 11 11" className="size-[11px]" aria-hidden="true">
						<path d="M3 4l2.500 3L8 4z" fill="#444" />
					</svg>
				</div>
			</div>
			<Taskbar />
		</div>
	);
}
